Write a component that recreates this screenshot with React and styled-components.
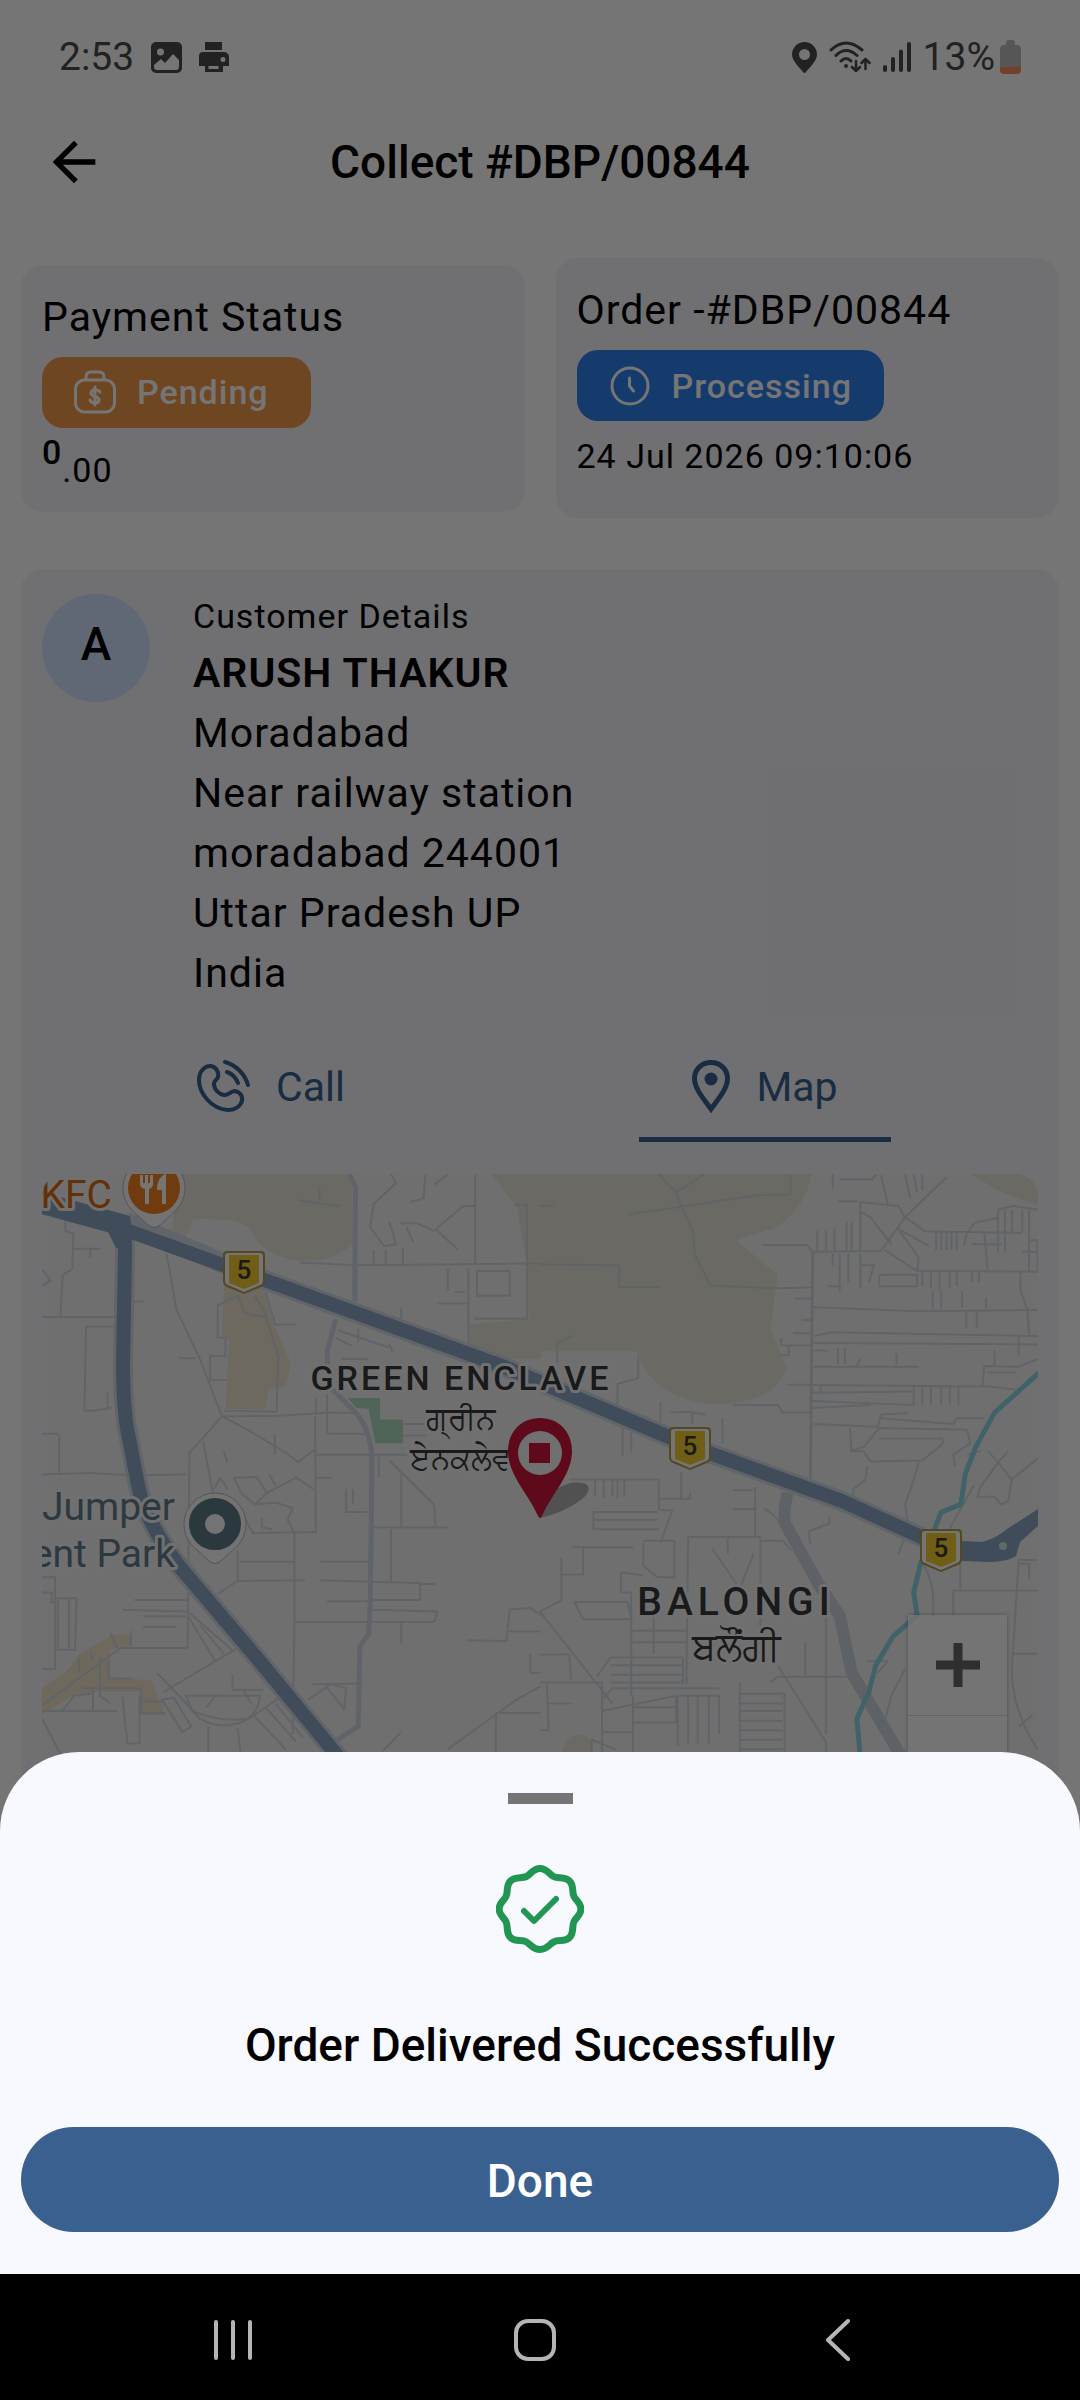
import React from 'react';
import styled, { createGlobalStyle } from 'styled-components';
import { MdArrowBack } from 'react-icons/md';

const GlobalStyle = createGlobalStyle`
  * {
    box-sizing: border-box;
  }
  body {
    margin: 0;
    background: #000;
    font-family: Roboto, "Noto Sans", sans-serif;
    color: #000;
  }
  button {
    font: inherit;
    color: inherit;
    border: none;
    background: none;
    padding: 0;
    cursor: pointer;
  }
  h1, h2, p {
    margin: 0;
    font-weight: 400;
  }
  svg {
    display: block;
    flex: none;
  }
`;

const Screen = styled.div`
  display: grid;
  grid-template-columns: minmax(0, 1fr);
  grid-template-rows: 1fr auto;
  min-height: 100vh;
`;

const Page = styled.div`
  grid-area: 1 / 1;
  background: #fff;
`;

const Scrim = styled.div`
  grid-area: 1 / 1;
  z-index: 1;
  background: rgba(0, 0, 0, 0.54);
  display: flex;
  flex-direction: column;
  justify-content: flex-end;
`;

const StatusBar = styled.div`
  display: flex;
  align-items: center;
  justify-content: space-between;
  height: 84px;
  padding: 30px 59px 0;
  font-size: 39px;
  line-height: 46px;
  color: #4b4b4b;
`;

const StatusGroup = styled.div`
  display: flex;
  align-items: center;
  gap: ${props => props.$gap}px;
`;

const AppBar = styled.header`
  display: grid;
  grid-template-columns: 1fr auto 1fr;
  align-items: center;
  height: 156px;
  padding: 0 42px;
`;

const BackButton = styled.button`
  justify-self: start;
`;

const Title = styled.h1`
  font-size: 46px;
  line-height: 56px;
  font-weight: 500;
`;

const Content = styled.main`
  display: flex;
  flex-direction: column;
  gap: 51px;
  padding: 18px 21px 0;
`;

const CardRow = styled.div`
  display: grid;
  grid-template-columns: 1fr 1fr;
  align-items: center;
  gap: 31px;
`;

const Card = styled.section`
  background: #f3f3fa;
  border-radius: 22px;
  padding: 22px 21px 18px;
`;

const BodyText = styled.p`
  font-size: 41px;
  line-height: 60px;
  font-weight: ${props => props.$weight || 400};
  letter-spacing: 1px;
`;

const SmallText = styled.p`
  font-size: 34px;
  line-height: 50px;
  letter-spacing: 1px;
`;

const Badge = styled.div`
  display: inline-flex;
  align-items: center;
  gap: 21px;
  height: 71px;
  min-width: 269px;
  margin-top: 10px;
  padding: 0 32px;
  border-radius: 21px;
  background: ${props => props.$color};
  color: #fff;
  font-size: 34px;
  font-weight: 500;
  letter-spacing: 1px;
  vertical-align: top;
`;

const Amount = styled(SmallText)`
  display: flex;
  line-height: 48px;
`;

const Major = styled.strong`
  font-weight: 500;
`;

const Minor = styled.span`
  padding-top: 18px;
`;

const OrderDate = styled(SmallText)`
  padding: 10px 0 19px;
`;

const Customer = styled.div`
  display: flex;
  gap: 43px;
`;

const CustomerLabel = styled(SmallText)`
  margin-bottom: 2px;
`;

const Avatar = styled.div`
  width: 108px;
  height: 108px;
  margin-top: 3px;
  border-radius: 50%;
  background: #d3e3ff;
  font-size: 46px;
  line-height: 100px;
  font-weight: 500;
  text-align: center;
`;

const Tabs = styled.div`
  display: flex;
  justify-content: space-between;
  padding: 29px 147px 32px 150px;
`;

const Tab = styled.button`
  display: flex;
  align-items: center;
  justify-content: ${props => props.$active ? 'center' : 'flex-start'};
  gap: 26px;
  width: 252px;
  height: 110px;
  padding: 4px 4px 0;
  border-bottom: 5px solid ${props => props.$active ? '#3a608f' : 'transparent'};
  color: #3a608f;
  font-size: 41px;
`;

const MapBox = styled.div`
  position: relative;
  height: 672px;
  border-radius: 22px;
  overflow: hidden;
  background: #f2f2f2;

  > svg {
    width: 100%;
    height: 100%;
  }
`;

const ZoomControl = styled.div`
  position: absolute;
  right: 31px;
  bottom: 31px;
  width: 99px;
  background: rgba(255, 255, 255, 0.8);
  box-shadow: 0 0 4px rgba(0, 0, 0, 0.3);
`;

const ZoomButton = styled.button`
  display: grid;
  place-items: center;
  width: 100%;
  height: 100px;

  & + & {
    border-top: 1px solid #d8d8d8;
  }
`;

const Sheet = styled.section`
  display: flex;
  flex-direction: column;
  align-items: center;
  padding: 41px 21px 42px;
  border-radius: 79px 79px 0 0;
  background: #f8f9ff;
`;

const Handle = styled.div`
  width: 65px;
  height: 11px;
  margin-bottom: 61px;
  background: #757575;
`;

const SheetTitle = styled.h2`
  margin: 62px 0 52px;
  font-size: 46px;
  line-height: 60px;
  font-weight: 500;
`;

const DoneButton = styled.button`
  width: 100%;
  height: 105px;
  padding-top: 2px;
  border-radius: 53px;
  background: #3a608f;
  color: #fff;
  font-size: 46px;
  font-weight: 500;
`;

const NavBar = styled.nav`
  display: grid;
  grid-template-columns: repeat(3, 1fr);
  place-items: center;
  height: 126px;
  padding: 6px 91px 0 82px;
  background: #000;
  color: #b5b5b5;
`;

const NavButton = styled.button`
  padding: 9px;
`;

const address = ['Moradabad', 'Near railway station', 'moradabad 244001', 'Uttar Pradesh UP', 'India'];

const ImageIcon = () => (
  <svg width="31" height="31" viewBox="0 0 31 31" fill="currentColor">
    <path fillRule="evenodd" d="M5 0h21a5 5 0 0 1 5 5v21a5 5 0 0 1-5 5H5a5 5 0 0 1-5-5V5a5 5 0 0 1 5-5zM3 23v2a3 3 0 0 0 3 3h19a3 3 0 0 0 3-3v-7l-6-6-8 9-4-4zM9.500 6.500a3.500 3.500 0 1 0 0 7 3.500 3.500 0 1 0 0-7z" />
  </svg>
);

const PrinterIcon = () => (
  <svg width="30" height="30" viewBox="0 0 30 30" fill="currentColor">
    <path fillRule="evenodd" d="M6 0h17v8H6zM4 10h21a5 5 0 0 1 5 5v9h-6v6H6v-6H0V14a4 4 0 0 1 4-4zM9.500 24v3h10v-3zM24 15a2.500 2.500 0 1 0 0 5 2.500 2.500 0 1 0 0-5z" />
  </svg>
);

const LocationIcon = () => (
  <svg width="25" height="31" viewBox="0 0 25 31" fill="currentColor">
    <path fillRule="evenodd" d="M12.500 0A12.500 12.500 0 0 1 25 12.500C25 19 17 26 14 30q-1.500 2-3 0C8 26 0 19 0 12.500A12.500 12.500 0 0 1 12.500 0zm0 7a5.500 5.500 0 1 0 0 11 5.500 5.500 0 1 0 0-11z" />
  </svg>
);

const WifiIcon = () => (
  <svg width="42" height="32" viewBox="0 0 42 32" fill="none" stroke="currentColor" strokeWidth="3" strokeLinecap="round" strokeLinejoin="round">
    <path d="M2 9Q17-5 33 9M7 14.500q10-10 21 0M12 20q5-5 10 0" />
    <path d="M27 20v10m-4-4 4 4 4-4M36.500 28V18m-4 4 4-4 4 4" strokeWidth="2.500" />
    <circle cx="17" cy="25" r="2" fill="currentColor" stroke="none" />
  </svg>
);

const SignalIcon = () => (
  <svg width="28" height="30" viewBox="0 0 28 30" stroke="currentColor" strokeWidth="4" strokeLinecap="round">
    <path d="M2 25v3M10 17v11M18 9.500V28M26 2v26" />
  </svg>
);

const BatteryIcon = () => (
  <svg width="21" height="34" viewBox="0 0 21 34">
    <path d="M6 3q0-3 3-3h3q3 0 3 3v2h2q4 0 4 4v18H0V9q0-4 4-4h2z" fill="#bbb" />
    <path d="M0 27h21v3q0 4-4 4H4q-4 0-4-4z" fill="#ff8a65" />
  </svg>
);

const PaymentIcon = () => (
  <svg width="42" height="44" viewBox="0 0 42 44" fill="none" stroke="#fff" strokeWidth="3" strokeLinecap="round" strokeLinejoin="round">
    <rect x="1.500" y="10" width="39" height="32" rx="9" />
    <path d="M12 9V7q0-5 5-5h8q5 0 5 5v2" />
    <path d="M26 22q-1-2-5-2-4 0-4 3 0 2.500 4 3.500t4 3.500q0 3-4 3t-5-3M21 17v18" />
  </svg>
);

const ClockIcon = () => (
  <svg width="42" height="44" viewBox="0 0 42 44" fill="none" stroke="#fff" strokeWidth="3" strokeLinecap="round" strokeLinejoin="round">
    <circle cx="21" cy="22" r="18" />
    <path d="M20.500 14v8l4 5" />
  </svg>
);

const CallIcon = () => (
  <svg width="54" height="54" viewBox="0 0 54 54" fill="none" stroke="currentColor" strokeWidth="4" strokeLinecap="round" strokeLinejoin="round">
    <path d="M3 20C3 11 9 6 14 6c6 0 9 6 8 11-1 3-5 4-4 8 1 5 5 9 10 10 4 1 6-4 11-4 5 1 8 5 7 10-2 6-8 9-14 9C15 49 3 33 3 20z" />
    <path d="M29 2c11 3 20 12 23 23M31 12c6 2 9 6 11 11" />
  </svg>
);

const MapPinIcon = () => (
  <svg width="38" height="53" viewBox="0 0 38 53" fill="none" stroke="currentColor" strokeWidth="5">
    <path d="M19 2.500c9.500 0 16.500 7 16.500 16C35.500 29 26 39 19 49 12 39 2.500 29 2.500 18.500c0-9 7-16 16.500-16z" />
    <circle cx="19" cy="19" r="6.500" fill="currentColor" stroke="none" />
  </svg>
);

const VerifiedIcon = () => (
  <svg width="88" height="88" viewBox="0 0 88 88" fill="none" stroke="#219653" strokeWidth="7" strokeLinecap="round" strokeLinejoin="round">
    <path d="M44 3.500c7 0 9 5.500 13.500 8 5 2.600 11-.5 16 4.500s2 10.500 4.500 15.500c2.300 4.600 7 6.500 7 12.500s-4.700 8-7 12.500c-2.500 5 .5 11-4.500 16s-11 1.500-16 4.500c-4.500 2.600-6.500 7.500-13.500 7.500s-9-5-13.500-7.500c-5-3-11 .5-16-4.500s-2-11-4.500-16C7.700 52 3 50 3 44s4.700-8 7-12.500c2.500-5-.5-10.500 4.500-15.500s11-2 16-4.500C35 9 37 3.500 44 3.500z" />
    <path d="M28 46l10 10 22-22" strokeWidth="6" />
  </svg>
);

const Shield = ({ x, y }) => (
  <g transform={`translate(${x} ${y})`}>
    <path d="M-17 0h34q4 0 4 4v26q0 4-4 6L0 43l-17-7q-4-2-4-6V4q0-4 4-4z" fill="#b39c55" />
    <path d="M-16 2h32q3 0 3 3v25q0 3-3 4L0 41l-16-7q-3-1-3-4V5q0-3 3-3z" fill="#fff" />
    <path d="M-15 4h30v28L0 38l-15-6z" fill="#f3cc33" />
    <text y="28" fontSize="26" fontWeight="500" textAnchor="middle" fill="#3c3c2c">5</text>
  </g>
);

const Label = styled.text`
  font-size: ${props => props.$size}px;
  font-weight: ${props => props.$weight || 400};
  letter-spacing: ${props => props.$spacing || 0}px;
  text-anchor: ${props => props.$anchor || 'middle'};
  fill: ${props => props.$color || '#37393b'};
  stroke: #f5f5f5;
  stroke-width: 6px;
  stroke-linejoin: round;
  paint-order: stroke;
`;

const Roads = styled.g`
  fill: none;
  stroke: ${props => props.$color || '#d2d9e1'};
  stroke-width: ${props => props.$width || 2}px;
  stroke-linejoin: round;

  path {
    vector-effect: non-scaling-stroke;
  }
`;

const Area = styled.path`
  fill: ${props => props.$color || '#e7e4d9'};
`;

// the street map is stored as two tiles that share one scale
const WEST = 'translate(-42 -14) scale(0.3444 0.3827)';
const EAST = 'translate(498 -14) scale(0.3444 0.3827)';

const StreetMap = () => (
  <svg viewBox="0 0 996 672" preserveAspectRatio="xMidYMin slice" role="img" aria-label="Delivery map">
    <g transform={WEST}>
      <Area d="M520 30H1020L1025 220Q960 270 860 262 770 250 730 190 720 150 560 155L540 200 500 185Z" />
      <Area d="M1420 30H1570V520L1480 518 1360 480 1365 430 1535 415 1530 270 1500 120Z" />
      <Area $color="#efe4ce" d="M650 330H760L800 440 845 530 830 590 780 600 770 650H655L665 470 645 460Z" />
      <Area $color="#f0e5c9" d="M122 1380L200 1330 230 1290 330 1240H380V1270L320 1280V1350L440 1360 480 1450H410V1390H270L210 1400 122 1450Z" />
      <Area $color="#afdabf" d="M1010 622H1103V678H1170V740H1090L1070 650 1035 648Z" />
    </g>
    <g transform={EAST}>
      <Area d="M-10 30H790Q780 110 690 175L570 210 690 300 670 440 715 540Q700 620 540 638 370 640 300 540L280 500H-10Z" />
      <Area d="M1240 30H1450V120L1330 80Z" />
      <Area d="M60 1550Q100 1470 150 1520V1560H60Z" />
    </g>
    <g transform={WEST}>
      <Roads>
        <path d="M190 150V185L213 192 210 285 182 300 175 410M122 410H330M213 232H290M262 232V255M122 285L147 315 122 330M330 435H250L245 655H270L325 648M312 648V605M122 715H165Q172 716 172 730V818M122 822L260 818 385 824 540 822M385 370H418" />
        <path d="M483 245L495 300 512 390 580 520 645 670 720 705 830 765 865 790 915 755M520 518H568M658 575H610V512H655V465H632V380L690 355 710 400 770 410M770 345L800 430H858M740 355L770 400 808 515 803 658 650 655M645 670L810 668 960 660 1040 662M645 670L550 765 545 1275M590 735L620 880M650 760L660 790M798 715V770" />
        <path d="M865 105L990 120M928 75V115M870 268L1040 275 1570 270M1135 38L1150 60 1085 115 1075 175 1115 225 1150 220 1130 160M1235 38L1230 100 1190 110M1163 165H1210L1260 185 1345 120H1380M1300 38L1260 65M1085 235V272M1120 235V272M1170 230V272M1180 175L1200 215M1265 180L1330 235M1385 290H1480V355H1385ZM1380 38V270M1375 415H1530V118H1495M1360 285V480M1300 285V342M1270 375H1360M1320 345H1350M1165 385V430M1235 440L1270 450" />
        <path d="M975 465L1020 485M980 445L1130 490M990 520L1070 520M1040 440V475M1130 480L1140 500M918 620V665M950 610V715H1060M950 690V665M915 670L917 975M730 975L915 972M915 770H1075M920 830H965M1005 860V920H1065M1025 860V900M1170 690H1240M1170 720H1240M1075 770H1240M1100 775V830M1130 785L1260 900 1265 960M1165 820V960M1080 960H1300M1135 965V1100" />
        <path d="M680 830L745 828 775 870 740 900 700 870ZM775 870L860 830 910 860M740 900L800 895 850 910 835 940 855 975V1205L850 1500M855 1207H1070M620 860L640 830 660 860M700 920L735 975M760 935V960L790 965M780 820L800 850M690 1020V1100L885 1098M930 1098L1080 1102M695 1050H855M930 1050H1070M1080 1102L1220 1105V1150H1080M950 1153H1070M1220 1108H1265M1080 1175L1270 1180 1260 1207H1080M1165 1210V1265M690 1100L630 1135M1355 1255L1470 1257 1480 1175 1540 1170 1570 1190M1478 1232H1570" />
        <path d="M122 1090H160V1330H122M122 1130H150V1155H160M168 1145H222L218 1280H168ZM200 1145V1275M355 1175L545 1180M390 1150H545M415 1192H540M415 1220H510M545 1180L680 1285M545 1190L625 1310 690 1275M580 1215L650 1290M545 1275H350L122 1425M262 1285L270 1310M320 1235L340 1275M380 1230V1270M315 1305V1355H385M235 1380H410V1450M270 1380V1440H180L215 1400 265 1395M290 1300V1400L320 1420M230 1300V1340M355 1400L370 1525H405V1400M122 1440H340M122 1460L180 1560M410 1415H475M410 1445H480" />
        <path d="M455 1340L520 1400 580 1460Q660 1500 740 1450L810 1405M540 1400H755Q750 1440 720 1460 640 1470 560 1440ZM625 1310L475 1390M675 1345V1385H765M470 1410L505 1405 555 1480 530 1495ZM600 1430L625 1400M705 1385L730 1420M605 1480V1560M690 1485L700 1560M740 1455L830 1540M770 1430L860 1520M800 1420L880 1510M895 1410L960 1370 1005 1380 1000 1435 950 1380M905 1370L1040 1368M1300 1540L1500 1410 1570 1375M1440 1445V1560M1110 1545L1165 1495M1570 1445H1440M1540 1290V1340H1570" />
      </Roads>
      <Roads $width="5" $color="#d1d8e1">
        <path d="M1015 38L1032 70 1030 370M975 415L950 500 955 590 1010 640Q1080 690 1080 790L1075 1160 1070 1240 1045 1270 1040 1480 980 1515" />
      </Roads>
    </g>
    <g transform={EAST}>
      <Roads>
        <path d="M345 38L395 85 475 38M395 85L445 190 450 250 495 328 690 335 790 333M255 143L630 92 728 90V38M0 273L230 275V332H350M50 530V480L100 458M0 120H40M645 222H775L795 245M740 362H790M760 418H790M735 453H790M700 465V485H790M700 510H722V485M718 587H790M560 640H690L705 660H785M285 515V570L225 585V640M350 632V690M375 660L430 658 480 665M442 660V690M530 675V740M240 700V775M265 712V762" />
        <path d="M795 240L990 238 1060 150 1180 45M930 238V110L1040 120 1060 150 1120 187 1400 190M850 38V75M870 50H965L975 38M990 40L1010 115M1060 38L1075 100M1085 38L1095 85M1110 38V80M865 108H925M930 135L960 150 1020 220M1000 235L1095 290 1100 255 1040 180 1130 225M1020 210L1000 200M1245 187L1260 165 1330 150V130L1375 120 1445 130M1150 190V235M1165 190V235M1180 190V235M1195 190V235M1210 190V235M1240 190L1230 225M1330 130V240M1350 130V240M1370 130V190M1400 130V190M1420 130V290M1255 220H1340M1290 190L1300 290M1400 240H1445M1420 210H1445V290" />
        <path d="M1095 290L1445 292M985 300H1095V330H985ZM930 245V335M870 245V345M895 245V320M850 245V275M835 330H868M930 275H970L955 320M805 185V235M830 185V235M855 178V235M890 160V235M905 160V235M1110 292V330M1135 292V335M1160 292V340M1190 292V335M1210 292V330M1140 342V390M1165 342V390M1225 342V385M1255 292V320M1275 292V320M795 385L1100 395 1445 392M1295 360V390M1238 397V440M1268 397V440M1395 290V340L1415 390 1420 455M795 460L850 450 1445 460M795 478L1445 482M795 498H835M865 490V535M885 490V535M795 540H1100M1035 505V535M920 540L930 520" />
        <path d="M790 588L1310 592M790 608L1080 605M790 630L1085 640V592M790 648L960 640M1110 592V640M1135 592V640M1165 592V640M1190 592V640M1215 592V640M815 590V605M1445 520L1390 540 1290 538 1285 590 1380 600M1300 555H1380M1320 497V540M1390 460V510M795 690L980 697 990 665 1070 662M990 675L1200 690 1210 675 1290 675M900 700L905 760 940 750 985 700 1240 705 1250 740 1200 770 1205 800M985 728H1165Q1175 735 1165 745L1110 785 960 788 940 762 900 760M1240 770L1280 760M1100 790L1080 850 1060 900 1070 960 1040 1030M950 800L945 835 910 860 908 890" />
        <path d="M1275 860L1330 790 1300 760M1330 790L1370 835 1445 780M1370 835L1360 890 1340 900 1320 880 1270 880 1280 850M1260 850L1160 1010M1330 790L1360 760M840 930V950L780 970 785 1005M560 863H620M560 912H625M625 855V985M430 985H640V1290M430 985L425 1370M300 1000V1060L340 1090M300 995H390V1090H340M500 1015L580 1120 620 1030M545 985V1030M640 995H705L730 1020M650 910Q690 930 695 950M85 835H345V915M155 920H340M155 940H340M155 965H345M155 920V965M160 835V880M185 835V885M210 835V880M225 835V885M245 835V880M345 885H435V870M410 815V885M345 915H385L350 1000" />
        <path d="M95 1012H270M125 1012V1083H62V1040M62 1083V1150L0 1180 210 1420M100 1155H255L265 1200H125ZM235 1078L300 1085M235 1078V1130H265V1400M330 1160V1290M265 1230H425M265 1260H425M165 1350L205 1300H415M205 1320H415M205 1345H415M205 1365H415M415 1300V1370M0 1292H85L90 1360M0 1365H180V1560M20 1365L25 1490H0M20 1420H90M180 1410L210 1380H520M180 1440L395 1400M270 1400V1560M270 1430H395M270 1470H395V1400M180 1495H270M400 1400V1530M430 1400V1525M458 1400V1525M490 1400V1525M400 1400H520V1500M580 1365V1560M580 1395H710V1560M580 1420H705M580 1440H705M580 1465H705M580 1490H705M580 1515H705M580 1540H705" />
        <path d="M670 1365L690 1350H890M690 1320L830 1520V1550M830 1165V1500M770 1260V1345M150 1560V1515L220 1540M1445 1045H1390L1370 1330Q1370 1440 1445 1540M1390 1055H1420V1095M1200 1190V1125H1445M1370 1290H1445M1220 1050V1120M1115 1060Q1150 1110 1140 1200M950 1310H1010L980 1340M1060 1330L1020 1400 1000 1470M1390 1480L1430 1450" />
      </Roads>
      <Roads $width="3">
        <path d="M792 240L785 850" />
      </Roads>
      <Roads $width="12" $color="#cdd4df">
        <path d="M718 870Q705 930 712 950L810 1110 870 1190 905 1340 1050 1560" />
      </Roads>
      <Roads $width="5" $color="#8fd6e3">
        <path d="M1450 555L1320 660 1265 750 1235 820 1222 900 1165 920 1145 965 1105 1055 1085 1130 1095 1190 1025 1245 975 1320 955 1390 920 1460 930 1560" />
      </Roads>
    </g>
    <Roads $width="20" $color="#d3dae3">
      <path d="M84 48L206 100 460 192 648 272 800 327 899 372" />
      <path d="M83 60V80L81 189C81 215 82 235 85 254L96 311Q102 345 137 392L215 484 322 614" />
    </Roads>
    <Roads $width="14" $color="#8ca5c4">
      <path d="M-4 32L84 56 206 100 460 192 648 272 800 327 899 372" />
      <path d="M83 60V80L81 189C81 215 82 235 85 254L96 311Q102 345 137 392L215 484 322 614" />
    </Roads>
    <path d="M0 18L88 42 90 56 84 74H74L66 58 0 38zM899 366L940 368Q955 364 965 355L996 335V352L978 368 974 382Q965 388 945 388L899 386z" fill="#8ca5c4" />
    <circle cx="961" cy="372" r="4" fill="#c8eee0" />

    <Shield x={202} y={77} />
    <Shield x={648} y={253} />
    <Shield x={899} y={355} />

    <Label x="70" y="34" $size={39} $anchor="end" $color="#d96a10">KFC</Label>
    <path d="M81 14a31 31 0 0 1 62 0c0 12-6 20-13 26l-12 11q-6 5-12 0L94 40C87 34 81 26 81 14z" fill="#fbfbfb" stroke="#b9b9b9" strokeWidth="1" />
    <circle cx="112" cy="14" r="26" fill="#f5821f" />
    <path d="M98 1v9q0 4 5 5v15h4V15q4-1 4-5V1h-3v8h-2V1h-3v8h-2V1zM124 0c-5 1-9 7-9 16h5v14h4z" fill="#fff" />

    <Label x="133" y="346" $size={39} $anchor="end" $color="#607d8b">Jumper</Label>
    <Label x="133" y="393" $size={39} $anchor="end" $color="#607d8b">ent Park</Label>
    <path d="M142 350a31 31 0 0 1 62 0c0 12-6 20-13 26l-12 11q-6 5-12 0l-12-11c-7-6-13-14-13-26z" fill="#fbfbfb" stroke="#b9b9b9" strokeWidth="1" />
    <circle cx="173" cy="350" r="18" fill="none" stroke="#5f7c8a" strokeWidth="16" />

    <Label x="419" y="216" $size={34} $weight={500} $spacing={3}>GREEN ENCLAVE</Label>
    <Label x="418" y="255" $size={31}>ਗ੍ਰੀਨ</Label>
    <Label x="418" y="295" $size={31}>ਏਨਕਲੇਵ</Label>
    <Label x="694" y="441" $size={39} $weight={500} $spacing={5}>BALONGI</Label>
    <Label x="694" y="486" $size={39}>ਬਲੌਂਗੀ</Label>

    <path d="M498 344L510 318Q530 304 544 310 552 317 536 328 520 339 498 344z" fill="#b0b0b0" />
    <path d="M498 244c19 0 32 14 32 33 0 24-20 42-30 65q-2 4-4 0c-10-23-30-41-30-65 0-19 13-33 32-33z" fill="#cf163b" />
    <circle cx="498" cy="279" r="22" fill="#f5f5f5" />
    <path d="M487 269h21v20h-21z" fill="#cf163b" />
  </svg>
);

const App = () => (
  <>
    <GlobalStyle />
    <Screen>
      <Page>
        <StatusBar>
          <StatusGroup $gap={17}>
            <span>2:53</span>
            <ImageIcon />
            <PrinterIcon />
          </StatusGroup>
          <StatusGroup $gap={12}>
            <LocationIcon />
            <WifiIcon />
            <SignalIcon />
            <StatusGroup $gap={5}>
              <span>13%</span>
              <BatteryIcon />
            </StatusGroup>
          </StatusGroup>
        </StatusBar>
        <AppBar>
          <BackButton aria-label="Back">
            <MdArrowBack size={64} />
          </BackButton>
          <Title>Collect #DBP/00844</Title>
        </AppBar>
        <Content>
          <CardRow>
            <Card>
              <BodyText>Payment Status</BodyText>
              <Badge $color="#f2994a">
                <PaymentIcon />
                Pending
              </Badge>
              <Amount>
                <Major>0</Major>
                <Minor>.00</Minor>
              </Amount>
            </Card>
            <Card>
              <BodyText>Order -#DBP/00844</BodyText>
              <Badge $color="#2f80ed">
                <ClockIcon />
                Processing
              </Badge>
              <OrderDate>24 Jul 2026 09:10:06</OrderDate>
            </Card>
          </CardRow>
          <Card>
            <Customer>
              <Avatar>A</Avatar>
              <div>
                <CustomerLabel>Customer Details</CustomerLabel>
                <BodyText $weight={600}>ARUSH THAKUR</BodyText>
                {address.map(line => <BodyText key={line}>{line}</BodyText>)}
              </div>
            </Customer>
            <Tabs>
              <Tab>
                <CallIcon />
                Call
              </Tab>
              <Tab $active>
                <MapPinIcon />
                Map
              </Tab>
            </Tabs>
            <MapBox>
              <StreetMap />
              <ZoomControl>
                <ZoomButton aria-label="Zoom in">
                  <svg width="44" height="44" viewBox="0 0 44 44" stroke="#666" strokeWidth="9">
                    <path d="M0 22h44M22 0v44" />
                  </svg>
                </ZoomButton>
                <ZoomButton aria-label="Zoom out">
                  <svg width="44" height="44" viewBox="0 0 44 44" stroke="#666" strokeWidth="9">
                    <path d="M0 22h44" />
                  </svg>
                </ZoomButton>
              </ZoomControl>
            </MapBox>
          </Card>
        </Content>
      </Page>
      <Scrim>
        <Sheet role="dialog" aria-label="Order status">
          <Handle />
          <VerifiedIcon />
          <SheetTitle>Order Delivered Successfully</SheetTitle>
          <DoneButton>Done</DoneButton>
        </Sheet>
      </Scrim>
      <NavBar>
        <NavButton aria-label="Recent apps">
          <svg width="38" height="42" viewBox="0 0 38 42" stroke="currentColor" strokeWidth="4" strokeLinecap="round">
            <path d="M2 3v36M19 3v36M36 3v36" />
          </svg>
        </NavButton>
        <NavButton aria-label="Home">
          <svg width="42" height="42" viewBox="0 0 42 42" fill="none" stroke="currentColor" strokeWidth="4">
            <rect x="2" y="2" width="38" height="38" rx="12" />
          </svg>
        </NavButton>
        <NavButton aria-label="Back">
          <svg width="24" height="42" viewBox="0 0 24 42" fill="none" stroke="currentColor" strokeWidth="4" strokeLinecap="round" strokeLinejoin="round">
            <path d="M22 2L2 21l20 19" />
          </svg>
        </NavButton>
      </NavBar>
    </Screen>
  </>
);

export default App;
